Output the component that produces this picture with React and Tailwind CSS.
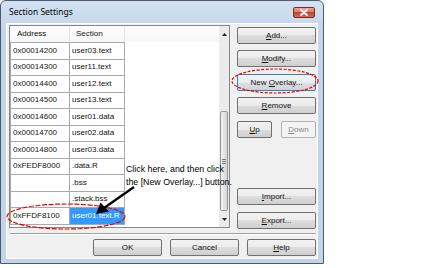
const rows = [
  ['0x00014200', 'user03.text'],
  ['0x00014300', 'user11.text'],
  ['0x00014400', 'user12.text'],
  ['0x00014500', 'user13.text'],
  ['0x00014600', 'user01.data'],
  ['0x00014700', 'user02.data'],
  ['0x00014800', 'user03.data'],
  ['0xFEDF8000', '.data.R'],
  ['', '.bss'],
  ['', '.stack.bss'],
  ['0xFFDF8100', 'user01.text.R'],
];

const btnBase =
  'flex h-[17px] items-center justify-center rounded-[2px] border text-[8px] leading-none';
const btnNormal =
  'border-[#707070] bg-[linear-gradient(#f2f2f2,#ebebeb_50%,#dddddd_50%,#cfcfcf)] text-[#111]';

const Btn = ({ children, className = '', disabled, focus }) => {
  let look = btnNormal;
  if (disabled) look = 'border-[#adb2b5] bg-[#f4f4f4] text-[#8a8a8a]';
  if (focus) look = 'border-[#3c7fb1] bg-[linear-gradient(#f2f4f6,#eaedf0_50%,#dcdfe3_50%,#cfd3d8)] text-[#111]';
  return (
    <div className={`${btnBase} ${look} ${className}`}>
      <span>{children}</span>
    </div>
  );
};

const U = ({ children }) => <span className="underline underline-offset-[1px]">{children}</span>;

const App = () => {
  return (
    <div className="relative h-[268px] w-[434px] overflow-hidden bg-white font-['Liberation_Sans',Arial,sans-serif]">
      <div className="flex h-[264px] w-[324px] flex-col rounded-t-[6px] border border-[#4f5a69] bg-[linear-gradient(#d3e2f3,#c2d5eb_30px,#c1d4ea)]">
        {/* title bar */}
        <div className="flex h-[22px] items-start justify-between">
          <span className="pl-[8px] pt-[7px] font-['Noto_Sans',sans-serif] text-[8.5px] leading-none text-black">Section Settings</span>
          <div className="mr-[8px] mt-[6px] flex h-[11px] w-[22px] items-center justify-center rounded-[2px] border border-[#7a2f2a] bg-[linear-gradient(#e9a99b,#d7705e_50%,#c4432f_50%,#d36a52)]">
            <svg width="8" height="7" viewBox="0 0 8 7">
              <path d="M1 1 L7 6 M7 1 L1 6" stroke="#fff" strokeWidth="1.8" strokeLinecap="round" />
            </svg>
          </div>
        </div>

        {/* client area */}
        <div className="ml-[5px] flex h-[236px] w-[312px] flex-col border border-white bg-[#f0f0f0]">
          <div className="flex">
            {/* list view */}
            <div className="ml-[2px] mt-[1px] flex h-[203px] w-[221px] border border-[#828790] bg-white">
              <div className="flex w-[209px] flex-col text-[8px] leading-none text-[#111]">
                <div className="flex h-[16px] bg-[linear-gradient(#ffffff,#f6f7f8)]">
                  <div className="flex w-[60px] items-center border-r border-[#e2e3ea] pl-[7px]">Address</div>
                  <div className="flex w-[55px] items-center border-r border-[#e2e3ea] pl-[6px]">Section</div>
                </div>
                {rows.map(([addr, sec], i) => {
                  const sel = i === rows.length - 1;
                  return (
                    <div key={i} className="flex h-[16.5px]">
                      <div className="flex w-[60px] items-center border-t border-r border-l border-[#a9a9a9] pl-[2px]">{addr}</div>
                      <div
                        className={`flex w-[55px] items-center border-t border-r border-[#a9a9a9] pl-[2px] ${
                          sel ? 'bg-[#3399ff] text-white' : ''
                        }`}
                      >
                        {sec}
                      </div>
                    </div>
                  );
                })}
                <div className="flex">
                  <div className="w-[60px] border-t border-[#a9a9a9]" />
                  <div className="w-[55px] border-t border-[#a9a9a9]" />
                </div>
              </div>
              {/* scrollbar */}
              <div className="flex w-[10px] flex-col bg-[#ebebeb]">
                <div className="flex h-[17px] items-center justify-center">
                  <svg width="5" height="3" viewBox="0 0 5 3">
                    <path d="M0 3 L2.5 0 L5 3 Z" fill="#222" />
                  </svg>
                </div>
                <div className="h-[68px]" />
                <div className="mx-[1px] flex h-[100px] items-center justify-center rounded-[2px] border border-[#979797] bg-[linear-gradient(90deg,#f3f3f3,#e4e4e4_50%,#d6d6d6)]">
                  <div className="flex w-[4px] flex-col gap-[1px]">
                    <div className="h-px bg-[#777]" />
                    <div className="h-px bg-[#777]" />
                    <div className="h-px bg-[#777]" />
                  </div>
                </div>
                <div className="flex flex-1 items-center justify-center">
                  <svg width="5" height="3" viewBox="0 0 5 3">
                    <path d="M0 0 L2.5 3 L5 0 Z" fill="#222" />
                  </svg>
                </div>
              </div>
            </div>

            {/* right buttons */}
            <div className="ml-[7px] flex w-[79px] flex-col pt-[3px]">
              <Btn><U>A</U>dd...</Btn>
              <Btn className="mt-[6px]"><U>M</U>odify...</Btn>
              <Btn className="mt-[7px]" focus>New <U>O</U>verlay...</Btn>
              <Btn className="mt-[6px]"><U>R</U>emove</Btn>
              <div className="mt-[7px] flex justify-between">
                <Btn className="w-[35px]"><U>U</U>p</Btn>
                <Btn className="w-[35px]" disabled><U>D</U>own</Btn>
              </div>
              <Btn className="mt-[50px]"><U>I</U>mport...</Btn>
              <Btn className="mt-[7px]"><U>E</U>xport...</Btn>
            </div>
          </div>

          {/* separator */}
          <div className="ml-[3px] mt-[4px] w-[306px] border-t border-b border-t-[#a0a0a0] border-b-white" />

          {/* bottom buttons */}
          <div className="mr-[1px] mt-[4px] flex justify-end gap-[8px]">
            <Btn className="w-[69px]">OK</Btn>
            <Btn className="w-[69px]">Cancel</Btn>
            <Btn className="w-[69px]"><U>H</U>elp</Btn>
          </div>
        </div>
      </div>

      {/* annotations */}
      <svg className="pointer-events-none absolute left-0 top-0" width="434" height="268" viewBox="0 0 434 268">
        <ellipse cx="275" cy="81" rx="43" ry="12" fill="none" stroke="#e00" strokeWidth="1.2" strokeDasharray="3 1.5" />
        <ellipse cx="66" cy="216.5" rx="59" ry="12.5" fill="none" stroke="#e00" strokeWidth="1.2" strokeDasharray="5 1.5" />
        <line x1="134" y1="187" x2="104" y2="208" stroke="#000" strokeWidth="2.2" />
        <path d="M96 214 L100.5 202.5 L109 211.5 Z" fill="#000" />
      </svg>
      <div className="absolute left-[126px] top-[163px] text-[8.8px] leading-[12.5px] text-black">
        <div>Click here, and then click</div>
        <div>the [New Overlay...] button.</div>
      </div>
    </div>
  );
};

export default App;
